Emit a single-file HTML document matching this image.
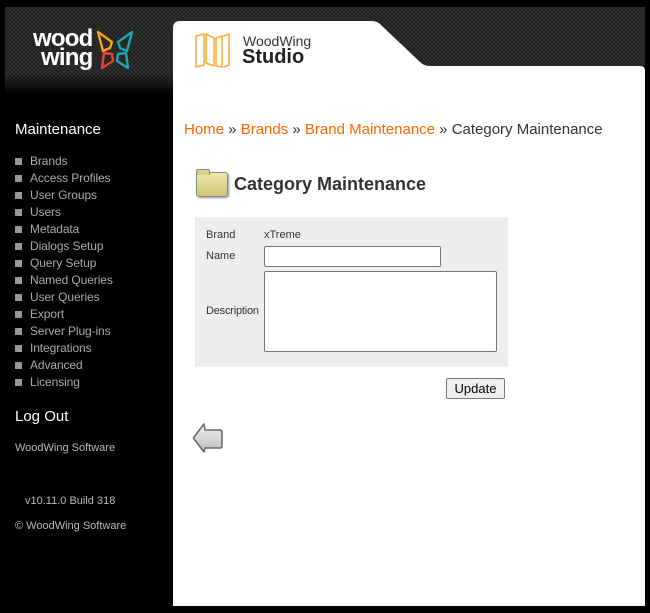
<!DOCTYPE html>
<html><head><style>
body{margin:0;width:650px;height:613px;background:#000;position:relative;overflow:hidden;font-family:"Liberation Sans",Arial,sans-serif}
.hdr{position:absolute;left:5px;top:7px;width:640px;height:87px;background-color:#222;background-image:linear-gradient(45deg,#2e2e2e 25%,transparent 25%,transparent 75%,#2e2e2e 75%),linear-gradient(45deg,#2e2e2e 25%,transparent 25%,transparent 75%,#2e2e2e 75%);background-size:4px 4px;background-position:0 0,2px 2px}
.hdr:after{content:"";position:absolute;left:0;right:0;bottom:0;height:20px;background:linear-gradient(transparent,#000)}
.side{position:absolute;left:15px;color:#bbb;font-size:12px}
.menu{position:absolute;left:15px;top:153px;margin:0;padding:0;list-style:none}
.menu li{color:#aaa;font-size:12px;height:17px;line-height:16px;letter-spacing:-0.1px}
.menu li:before{content:"";display:inline-block;width:7px;height:7px;background:#999;margin-right:8px;vertical-align:0px}
a{color:#f60;text-decoration:none}
</style></head><body>
<div class="hdr"></div>
<svg style="position:absolute;left:0;top:0" width="650" height="613">
<path d="M173 28 Q173 21 180 21 L372 21 Q377 21 381 25 L420 62 Q424 66 430 66 L640 66 Q645 66 645 71 L645 606 L173 606 Z" fill="#fff"/>
<g fill="none" stroke-width="2.4" stroke-linecap="round" stroke-linejoin="round">
<path d="M98 32 L112 42 L110 48 L103 51 Z" stroke="#f7a21b"/>
<path d="M104 53 L112 54 L113 61 L102 68 Z" stroke="#e94036"/>
<path d="M132 32 L118 42 L120 48 L127 51 Z" stroke="#20a3b2"/>
<path d="M126 53 L118 54 L117 61 L128 68 Z" stroke="#20a3b2"/>
<path d="M196 36 L204 34 L204 65 L196 67 Z M206 34 L214 38 L214 66 L206 63 Z M216 38 L222 36 L222 67 L216 66 Z M224 36 L229 34 L229 65 L224 67" stroke="#fbb03b" stroke-width="1.6"/>
</g>
</svg>
<div style="position:absolute;left:33px;top:29px;color:#fff;font-size:24px;font-weight:bold;line-height:19px;letter-spacing:-0.8px">wood<br><span style="padding-left:8px">wing</span></div>
<div style="position:absolute;left:243px;top:33px;color:#333;font-size:14px">WoodWing</div>
<div style="position:absolute;left:242px;top:46px;color:#222;font-size:20px;font-weight:600">Studio</div>
<div style="position:absolute;left:15px;top:121px;color:#fff;font-size:15px">Maintenance</div>
<ul class="menu"><li>Brands</li><li>Access Profiles</li><li>User Groups</li><li>Users</li><li>Metadata</li><li>Dialogs Setup</li><li>Query Setup</li><li>Named Queries</li><li>User Queries</li><li>Export</li><li>Server Plug-ins</li><li>Integrations</li><li>Advanced</li><li>Licensing</li></ul>
<div style="position:absolute;left:15px;top:408px;color:#fff;font-size:15px">Log Out</div>
<div class="side" style="top:442px;font-size:11px">WoodWing Software</div>
<div class="side" style="top:495px;left:25px;font-size:11px">v10.11.0 Build 318</div>
<div class="side" style="top:520px;font-size:11px">© WoodWing Software</div>
<div style="position:absolute;left:184px;top:121px;font-size:15px;color:#333"><a>Home</a> » <a>Brands</a> » <a>Brand Maintenance</a> » Category Maintenance</div>
<div style="position:absolute;left:196px;top:172px;width:30px;height:23px;background:linear-gradient(#efe9a8,#cfc57a);border:1px solid #888;border-radius:3px;box-shadow:1px 1px 2px #999"></div>
<div style="position:absolute;left:196px;top:169px;width:12px;height:5px;background:#d9d08a;border:1px solid #888;border-bottom:none;border-radius:2px 2px 0 0"></div>
<div style="position:absolute;left:234px;top:174px;font-size:18px;font-weight:bold;color:#333">Category Maintenance</div>
<div style="position:absolute;left:195px;top:217px;width:313px;height:150px;background:#eee"></div>
<div style="position:absolute;left:206px;top:229px;font-size:11px;color:#333">Brand</div>
<div style="position:absolute;left:264px;top:229px;font-size:11px;color:#333">xTreme</div>
<div style="position:absolute;left:206px;top:250px;font-size:11px;color:#333">Name</div>
<div style="position:absolute;left:206px;top:305px;font-size:11px;color:#333;letter-spacing:-0.2px">Description</div>
<div style="position:absolute;left:264px;top:246px;width:175px;height:19px;background:#fff;border:1px solid #777;border-radius:2px"></div>
<div style="position:absolute;left:264px;top:271px;width:231px;height:79px;background:#fff;border:1px solid #777;border-radius:2px"></div>
<div style="position:absolute;left:446px;top:378px;width:57px;height:19px;background:#efefef;border:1px solid #777;border-radius:2px;font-size:13px;text-align:center;line-height:19px;color:#000">Update</div>
<svg style="position:absolute;left:192px;top:422px" width="34" height="36"><defs><linearGradient id="g" x1="0" y1="0" x2="0" y2="1"><stop offset="0" stop-color="#f2f2f2"/><stop offset="1" stop-color="#bbb"/></linearGradient></defs><path d="M12 2 L2 15 Q1 16 2 17 L12 30 L13 26 L28 26 Q30 26 30 24 L30 10 Q30 8 28 8 L13 8 Z" fill="url(#g)" stroke="#666" stroke-width="1.5" stroke-linejoin="round"/></svg>
</body></html>
